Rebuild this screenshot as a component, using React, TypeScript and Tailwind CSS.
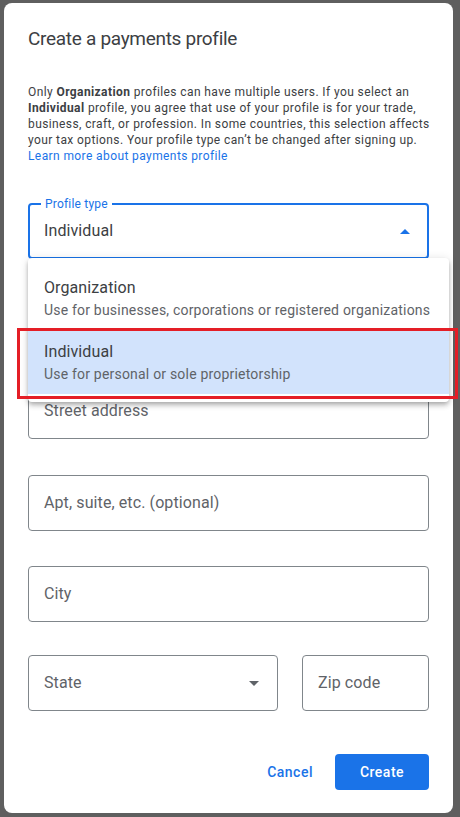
import React from 'react';

const FONT = { fontFamily: 'Roboto, "Liberation Sans", sans-serif' };

function Field({ label, className = '' }: { label: string; className?: string }) {
  return (
    <div
      className={`h-14 rounded-[4px] border border-[#80868b] flex items-center px-[15px] text-base tracking-[0.1px] text-[#5f6368] ${className}`}
    >
      {label}
    </div>
  );
}

const MENU = [
  { title: 'Organization', sub: 'Use for businesses, corporations or registered organizations' },
  { title: 'Individual', sub: 'Use for personal or sole proprietorship', active: true },
];

export default function App() {
  return (
    <div className="relative h-[817px] w-[460px] bg-[#5f5f5f] pl-[4px] pt-[3px] overflow-hidden" style={FONT}>
      <div className="relative w-[449px] h-[810px] bg-white rounded-[8px] px-6 pt-[22px] flex flex-col">
        <h2 className="text-[19px] leading-7 tracking-[-0.3px] text-[#3c4043]">Create a payments profile</h2>

        <p className="mt-[31px] text-xs leading-4 tracking-[0.4px] text-[#3c4043] whitespace-nowrap">
          Only <b className="font-bold">Organization</b> profiles can have multiple users. If you select an
          <br />
          <b className="font-bold">Individual</b> profile, you agree that use of your profile is for your trade,
          <br />
          business, craft, or profession. In some countries, this selection affects
          <br />
          your tax options. Your profile type can’t be changed after signing up.
          <br />
          <span className="text-[#1a73e8]">Learn more about payments profile</span>
        </p>

        {/* profile type select, open */}
        <div className="relative mt-[39px] h-14 rounded-[4px] border-2 border-[#1a73e8] flex items-center pl-[14px] pr-[17px]">
          <span className="absolute -top-[9px] left-[11px] bg-white px-1 text-xs leading-4 tracking-[0.2px] text-[#1a73e8]">
            Profile type
          </span>
          <span className="flex-1 text-base tracking-[0.1px] text-[#3c4043]">Individual</span>
          <svg width="10" height="5" viewBox="0 0 10 5">
            <path d="M0 5 L5 0 L10 5 Z" fill="#1a73e8" />
          </svg>
        </div>

        {/* field hidden under the open menu */}
        <Field label="" className="mt-8" />
        <Field label="Street address" className="mt-9" />
        <Field label="Apt, suite, etc. (optional)" className="mt-9" />
        <Field label="City" className="mt-[35px]" />

        <div className="mt-[33px] flex gap-6">
          <div className="w-[250px] h-14 rounded-[4px] border border-[#80868b] flex items-center pl-[15px] pr-[18px] text-base tracking-[0.1px] text-[#5f6368]">
            <span className="flex-1">State</span>
            <svg width="10" height="5" viewBox="0 0 10 5">
              <path d="M0 0 L5 5 L10 0 Z" fill="#5f6368" />
            </svg>
          </div>
          <Field label="Zip code" className="flex-1" />
        </div>

        <div className="mt-[43px] flex justify-end gap-2">
          <button className="h-9 px-[14px] text-sm font-medium tracking-[0.5px] text-[#1a73e8] rounded-[4px]">Cancel</button>
          <button className="h-9 w-[94px] text-sm font-medium tracking-[0.5px] text-white bg-[#1a73e8] rounded-[4px]">Create</button>
        </div>
      </div>

      {/* dropdown menu */}
      <div className="absolute left-[28px] top-[258px] w-[421px] bg-white rounded-[4px] py-2 shadow-[0_2px_4px_-1px_rgba(0,0,0,0.2),0_4px_5px_0_rgba(0,0,0,0.14),0_1px_10px_0_rgba(0,0,0,0.12)]">
        {MENU.map((m) => (
          <div key={m.title} className={`h-16 px-4 pt-[10px] ${m.active ? 'bg-[#d2e3fc]' : ''}`}>
            <div className="text-base leading-6 tracking-[0.1px] text-[#3c4043]">{m.title}</div>
            <div className="text-sm leading-5 tracking-[0.2px] text-[#5f6368] whitespace-nowrap">{m.sub}</div>
          </div>
        ))}
      </div>

      {/* highlight annotation */}
      <div className="absolute left-[17px] top-[328px] w-[441px] h-[71px] border-[3px] border-[#e41e26]" />
    </div>
  );
}
